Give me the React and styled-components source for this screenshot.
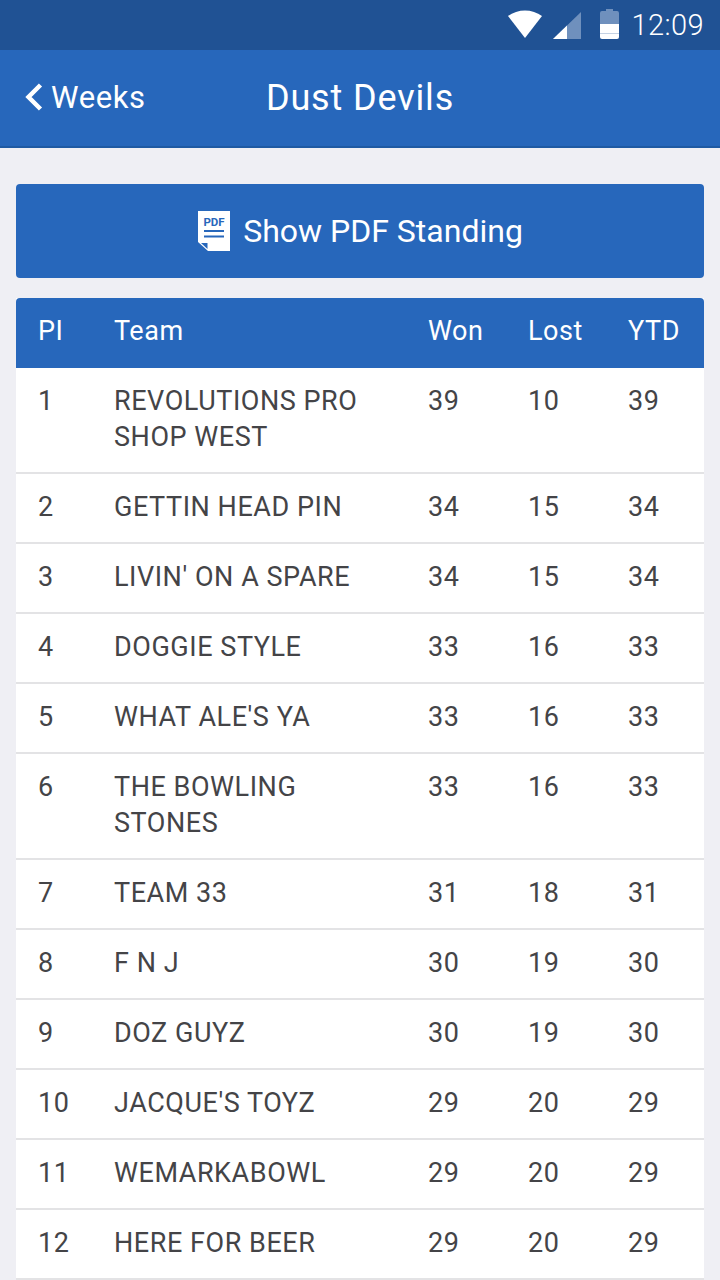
import React from "react";
import styled, { createGlobalStyle } from "styled-components";

const Global = createGlobalStyle`
  html, body { margin: 0; padding: 0; background: #efeff4; }
  body { font-family: Roboto, "Liberation Sans", sans-serif; }
`;
const Page = styled.div`
  width: 720px; height: 1280px; overflow: hidden; background: #efeff4;
  display: flex; flex-direction: column;
`;
const StatusBar = styled.div`
  height: 50px; background: #205294; color: #fff; flex: none;
  display: flex; align-items: center; justify-content: flex-end;
  padding-right: 16px; box-sizing: border-box;
`;
const Clock = styled.span`
  font-size: 29px; font-weight: 300; margin-left: 13px; letter-spacing: 0.4px; line-height: 50px;
`;
const StatusIcon = styled.svg`
  display: block; flex: none; margin-left: ${p => p.$gap || 0}px;
`;
const NavBar = styled.div`
  height: 98px; box-sizing: border-box; flex: none; background: #2767bb;
  border-bottom: 2px solid #1f5aa3; display: flex; align-items: center;
  position: relative; color: #fff;
`;
const Back = styled.div`
  display: flex; align-items: center; margin-left: 25px; margin-top: -2px;
  font-size: 31px; letter-spacing: 0.6px; gap: 8px;
`;
const Title = styled.div`
  position: absolute; left: 0; right: 0; text-align: center; font-size: 36px;
  letter-spacing: 0.85px; line-height: 96px; top: 0;
`;
const Content = styled.div`
  padding: 36px 16px 0; display: flex; flex-direction: column; gap: 20px;
`;
const PdfButton = styled.div`
  height: 94px; background: #2767bb; border-radius: 4px; color: #fff; padding-left: 1px;
  display: flex; align-items: center; justify-content: center; gap: 13px; font-size: 32px;
`;
const Table = styled.div`
  display: flex; flex-direction: column; background: #fff;
`;
const Row = styled.div`
  display: grid; grid-template-columns: 99px 314px 100px 100px 1fr;
  font-size: 27px; letter-spacing: 0.55px; line-height: 36px; box-sizing: border-box;
  color: ${p => (p.$head ? "#fff" : "#444447")};
  background: ${p => (p.$head ? "#2767bb" : "#fff")};
  padding: ${p => (p.$head ? "15px 0 19px" : "15px 0 17px")};
  border-bottom: ${p => (p.$head ? "0" : "2px solid #e3e3e5")};
  border-radius: ${p => (p.$head ? "4px 4px 0 0" : "0")};
`;
const Cell = styled.div`
  padding-left: ${p => (p.$first ? "22px" : "0")};
  margin-left: ${p => (p.$first ? "0" : "-1px")};
  padding-right: ${p => (p.$team ? "40px" : "0")};
`;

const rows = [
  ["1", "REVOLUTIONS PRO SHOP WEST", 39, 10, 39],
  ["2", "GETTIN HEAD PIN", 34, 15, 34],
  ["3", "LIVIN' ON A SPARE", 34, 15, 34],
  ["4", "DOGGIE STYLE", 33, 16, 33],
  ["5", "WHAT ALE'S YA", 33, 16, 33],
  ["6", "THE BOWLING STONES", 33, 16, 33],
  ["7", "TEAM 33", 31, 18, 31],
  ["8", "F N J", 30, 19, 30],
  ["9", "DOZ GUYZ", 30, 19, 30],
  ["10", "JACQUE'S TOYZ", 29, 20, 29],
  ["11", "WEMARKABOWL", 29, 20, 29],
  ["12", "HERE FOR BEER", 29, 20, 29],
];

export default function App() {
  return (
    <Page>
      <Global />
      <StatusBar>
        <StatusIcon width="34" height="32" viewBox="0 0 34 32">
          <path d="M0 7 C9.5 -0.5 24.5 -0.5 34 7 L17 29 Z" fill="#fff" />
        </StatusIcon>
        <StatusIcon $gap={11} width="28" height="32" viewBox="0 0 28 32">
          <path d="M0 30 L28 3 V30 Z" fill="#6f90bd" />
          <path d="M0 30 L14 16.5 V30 Z" fill="#fff" />
        </StatusIcon>
        <StatusIcon $gap={19} width="19" height="32" viewBox="0 0 19 32">
          <path d="M6 0 H13 V2 H17 Q19 2 19 4 V15 H0 V4 Q0 2 2 2 H6 Z" fill="#6f90bd" />
          <path d="M0 15 H19 V28 Q19 30 17 30 H2 Q0 30 0 28 Z" fill="#fff" />
          <rect x="0" y="24" width="19" height="1" fill="#c5d2e4" />
        </StatusIcon>
        <Clock>12:09</Clock>
      </StatusBar>
      <NavBar>
        <Title>Dust Devils</Title>
        <Back>
          <svg width="18" height="28" viewBox="0 0 18 28">
            <path d="M15.5 2 L3.5 14 L15.5 26" fill="none" stroke="#fff" strokeWidth="4.5" />
          </svg>
          <span>Weeks</span>
        </Back>
      </NavBar>
      <Content>
        <PdfButton>
          <svg width="32" height="40" viewBox="0 0 32 40">
            <path d="M0 0 H32 V40 H10 L0 31 Z" fill="#fff" />
            <path d="M3 32 H9.5 V38 Z" fill="#2767bb" />
            <rect x="6" y="19" width="20" height="2" fill="#2767bb" />
            <rect x="6" y="24.5" width="20" height="2" fill="#2767bb" />
            <text x="16" y="14.5" textAnchor="middle" fontFamily="Roboto, sans-serif" fontWeight="700" fontSize="11.5" fill="#2767bb">PDF</text>
          </svg>
          <span>Show PDF Standing</span>
        </PdfButton>
        <Table>
          <Row $head>
            <Cell $first>PI</Cell>
            <Cell>Team</Cell>
            <Cell>Won</Cell>
            <Cell>Lost</Cell>
            <Cell>YTD</Cell>
          </Row>
          {rows.map(r => (
            <Row key={r[0]}>
              <Cell $first>{r[0]}</Cell>
              <Cell $team>{r[1]}</Cell>
              <Cell>{r[2]}</Cell>
              <Cell>{r[3]}</Cell>
              <Cell>{r[4]}</Cell>
            </Row>
          ))}
        </Table>
      </Content>
    </Page>
  );
}
